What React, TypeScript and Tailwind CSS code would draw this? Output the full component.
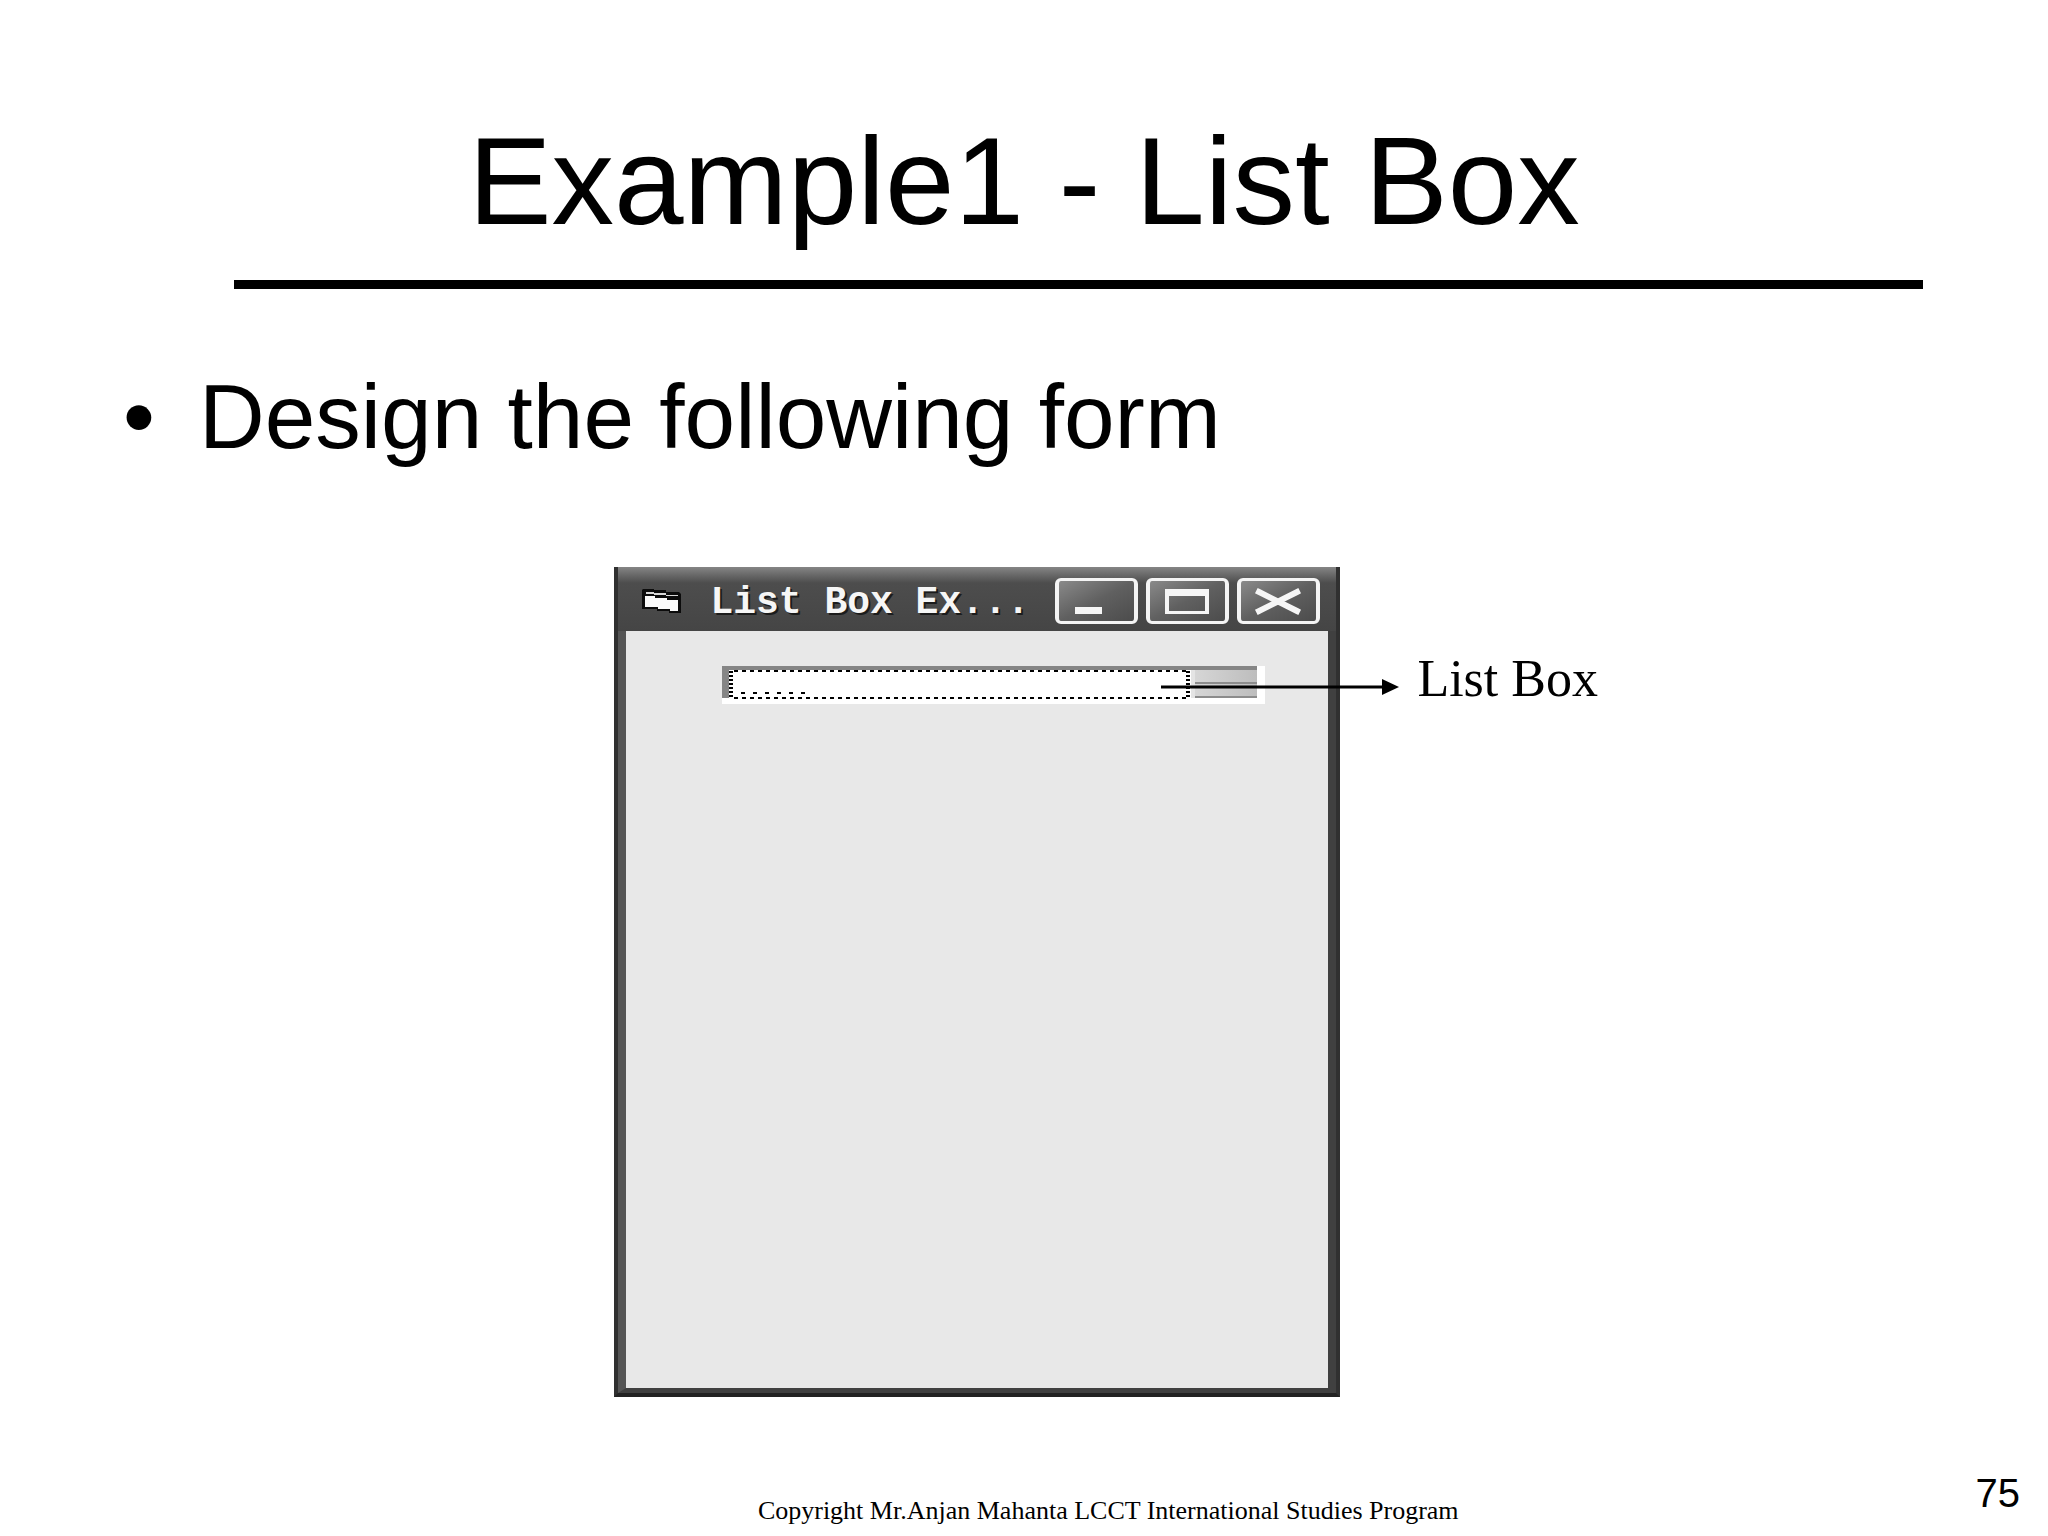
const captionButton =
  "flex h-[46px] w-[83px] items-center justify-center rounded-md border-x-4 border-y-[3px] border-[#f4f4f4] bg-linear-to-br from-[#8a8a8a] via-[#606060] to-[#4c4c4c]";

function FormIcon() {
  return (
    <svg aria-hidden="true" className="h-6 w-10" viewBox="0 0 40 24">
      <path d="M1 0h11v1h12v2h13l2 2v19H27v-2H15v-2H0V1z" fill="#0c0c0c" />
      <path d="M4 3h8v1h12v2h12v1H24V6H12V5H4z" fill="#d8d8d8" />
      <path d="M3 7h10v2h12v2h11v11h-8v-2H16v-2H3z" fill="#fafafa" />
    </svg>
  );
}

function TitleBar() {
  return (
    <header className="flex h-16 items-center bg-linear-to-b from-[#858585] via-[#4d4d4d] via-25% to-[#454545] px-4 pt-1">
      <div className="pl-2">
        <FormIcon />
      </div>
      <h2 className="flex-1 pt-1 pl-7 font-['Liberation_Mono','Courier_New',monospace] text-[38px] leading-10 font-bold whitespace-nowrap text-[#f6f6f6] [text-shadow:2px_2px_0_#1c1c1c]">
        List Box Ex...
      </h2>
      <div className="flex gap-2">
        <button type="button" aria-label="Minimize" className={captionButton}>
          <svg className="h-10 w-[75px]" viewBox="0 0 75 40" fill="#f6f6f6">
            <path d="M16 26h27v7H16z" />
          </svg>
        </button>
        <button type="button" aria-label="Maximize" className={captionButton}>
          <svg className="h-10 w-[75px]" viewBox="0 0 75 40" fill="#f6f6f6">
            <path fillRule="evenodd" d="M15 8h44v25H15zM19 15v15h36V15z" />
          </svg>
        </button>
        <button type="button" aria-label="Close" className={captionButton}>
          <svg className="h-10 w-[75px]" viewBox="0 0 75 40" fill="none">
            <path d="M18 11l38 19M56 11L18 30" stroke="#f6f6f6" strokeWidth="6" strokeLinecap="square" />
          </svg>
        </button>
      </div>
    </header>
  );
}

function ListBox() {
  return (
    <div className="relative flex h-[38px] w-[543px] border-r-8 border-b-[6px] border-white bg-white">
      <select
        id="list-box"
        size={2}
        className="h-full min-w-0 flex-1 appearance-none overflow-hidden rounded-none border-t-4 border-l-[7px] border-[#858585] bg-white outline-none"
      />
      {/* empty scroll bar, squeezed by the low height of the list */}
      <div className="flex w-[66px] flex-col border-t-4 border-[#858585] bg-[#e4e4e4] pl-1">
        <button type="button" aria-label="Scroll up" className="flex-1 border-b-2 border-[#8c8c8c] bg-linear-to-r from-[#d6d6d6] to-[#bdbdbd]" />
        <button type="button" aria-label="Scroll down" className="flex-1 border-b-2 border-[#8c8c8c] bg-linear-to-r from-[#d6d6d6] to-[#bdbdbd]" />
      </div>
      {/* focus rectangle */}
      <svg
        aria-hidden="true"
        className="pointer-events-none absolute top-1 left-[7px] h-[30px] w-[462px]"
        viewBox="0 0 462 30"
        stroke="#000"
        fill="none"
      >
        <path d="M5 1h454M5 28h454" strokeWidth="2" strokeDasharray="4 4" />
        <path d="M2 1v26M459 1v28" strokeWidth="4" strokeDasharray="2 2" />
        <path d="M12 23h66" strokeWidth="2" strokeDasharray="4 8" />
      </svg>
    </div>
  );
}

function FormWindow() {
  return (
    <div className="relative w-[726px] shrink-0 border-x-4 border-b-4 border-x-[#303030] border-b-[#222]">
      <TitleBar />
      <div className="h-[762px] border-x-8 border-b-5 border-r-[#404040] border-b-[#404040] border-l-[#555] bg-[#e8e8e8] px-24 pt-[35px]">
        <ListBox />
      </div>
      {/* pointer from the list to its caption */}
      <svg
        aria-hidden="true"
        className="pointer-events-none absolute top-[111px] left-[543px] h-[18px] w-[238px]"
        viewBox="0 0 238 18"
      >
        <path d="M0 9h222" stroke="#000" strokeWidth="3" />
        <path d="M221 1l17 8-17 8z" />
      </svg>
    </div>
  );
}

export default function App() {
  return (
    <div className="flex min-h-screen flex-col bg-white font-['Liberation_Sans',Arial,sans-serif] text-black">
      <h1 className="pt-[109px] text-center text-[125px] leading-[144px]">
        Example1 - List Box
      </h1>
      <hr className="mt-[27px] mr-[125px] ml-[234px] h-[9px] border-0 bg-black" />

      <main>
        <ul className="mt-[76px] pl-[123px] text-[91px] leading-[104px]">
          <li className="flex">
            <span aria-hidden="true" className="w-[76px]">
              •
            </span>
            Design the following form
          </li>
        </ul>

        <div className="mt-[98px] flex pl-[30%]">
          <FormWindow />
          <label
            htmlFor="list-box"
            className="pt-[82px] pl-[77px] font-['Liberation_Serif','Times_New_Roman',serif] text-[52px] leading-[60px] whitespace-nowrap"
          >
            List Box
          </label>
        </div>
      </main>

      <footer className="mt-auto flex items-start pr-7 pb-[9px] pl-[241px]">
        <p className="flex-1 pt-6 text-center font-['Liberation_Serif','Times_New_Roman',serif] text-[26px] leading-8">
          Copyright Mr.Anjan Mahanta LCCT International Studies Program
        </p>
        <span className="text-[40px] leading-[44px]">75</span>
      </footer>
    </div>
  );
}
